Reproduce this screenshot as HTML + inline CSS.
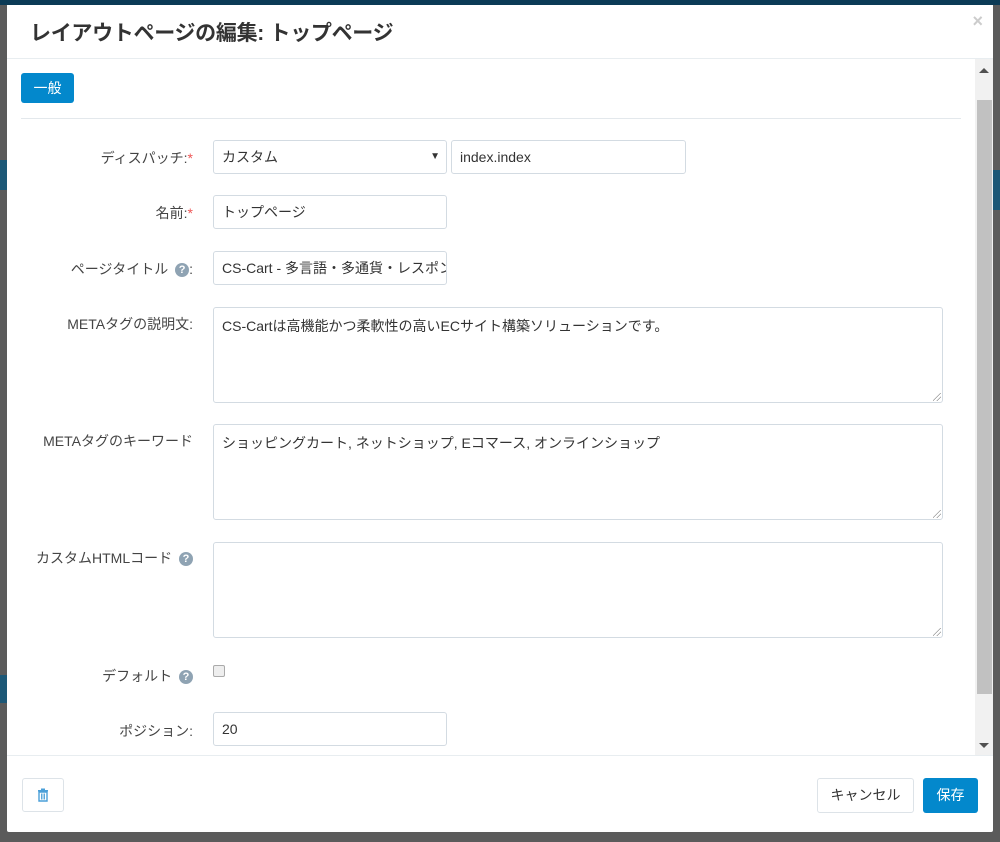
<!DOCTYPE html>
<html><head><meta charset="utf-8"><style>
*{box-sizing:border-box;margin:0;padding:0}
body{width:1000px;height:842px;overflow:hidden;background:#5b5b5b;font-family:"Liberation Sans","Noto Sans CJK JP",sans-serif;color:#333;position:relative;font-size:14px}
.topband{position:absolute;left:0;top:0;width:1000px;height:5px;background:#0b3b56}
.bg{position:absolute;background:#4e4e4e}
.modal{position:absolute;left:7px;top:5px;width:986px;height:827px;background:#fff;border-radius:2px}
.hdr{position:absolute;left:0;top:0;width:986px;height:54px;border-bottom:1px solid #e8edf0;z-index:2;background:#fff}
.hdr h3{position:absolute;left:23px;top:12px;font-size:21px;font-weight:bold;color:#333;letter-spacing:-0.3px}
.close{position:absolute;right:10px;top:6px;color:#ccc;font-size:18px;font-weight:bold}
.body{position:absolute;left:0;top:49px;width:968px;height:701px;overflow:hidden}
.sb{position:absolute;left:968px;top:54px;width:18px;height:696px;background:#f1f1f1}
.thumb{position:absolute;left:2px;top:41px;width:15px;height:594px;background:#c1c1c1}
.tab{position:absolute;left:14px;top:19px;width:53px;height:30px;background:#0388cc;color:#fff;border-radius:3px;text-align:center;line-height:30px;font-size:14px}
.hr{position:absolute;left:14px;top:64px;width:940px;height:1px;background:#e3e8ec}
.lbl{position:absolute;right:782px;font-size:14px;color:#444;white-space:nowrap}
.req{color:#e55;}
.q{display:inline-block;width:14px;height:14px;border-radius:50%;background:#8fa3b3;color:#fff;font-size:11px;font-weight:bold;text-align:center;line-height:14px;vertical-align:1px;margin-left:3px}
.in{position:absolute;border:1px solid #d3dbe2;border-radius:3px;background:#fff;padding:0 8px;font-size:14px;color:#333;white-space:nowrap;overflow:hidden}
.ta{position:absolute;left:206px;width:730px;height:96px;border:1px solid #d3dbe2;border-radius:3px;padding:8px 8px;font-size:14px;color:#333}
.grip{position:absolute;right:1px;bottom:1px;width:8px;height:8px;background:linear-gradient(135deg,transparent 45%,#999 45%,#999 52%,transparent 52%,transparent 70%,#999 70%,#999 77%,transparent 77%)}
.ftr{position:absolute;left:0;top:750px;width:986px;height:77px;border-top:1px solid #e8edf0}
.btn{position:absolute;border-radius:3px;font-size:14px;text-align:center}
</style></head><body>
<div class="topband"></div>
<div class="bg" style="left:0;top:160px;width:7px;height:30px;background:#1d5877"></div>
<div class="bg" style="left:993px;top:170px;width:7px;height:40px;background:#1d5877"></div>
<div class="bg" style="left:0;top:675px;width:7px;height:28px;background:#1d5877"></div>
<div class="modal">
 <div class="hdr"><h3>レイアウトページの編集: トップページ</h3><div class="close">×</div></div>
 <div class="body">
  <div class="tab">一般</div>
  <div class="hr"></div>
  <div class="lbl" style="top:94px">ディスパッチ:<span class="req">*</span></div>
  <div class="in" style="left:206px;top:86px;width:234px;height:34px;line-height:32px">カスタム<span style="position:absolute;right:6px;font-size:10px;color:#333">▼</span></div>
  <div class="in" style="left:444px;top:86px;width:235px;height:34px;line-height:32px">index.index</div>
  <div class="lbl" style="top:149px">名前:<span class="req">*</span></div>
  <div class="in" style="left:206px;top:141px;width:234px;height:34px;line-height:32px">トップページ</div>
  <div class="lbl" style="top:205px">ページタイトル <span class="q">?</span>:</div>
  <div class="in" style="left:206px;top:197px;width:234px;height:34px;line-height:32px">CS-Cart - 多言語・多通貨・レスポンシブ</div>
  <div class="lbl" style="top:260px">METAタグの説明文:</div>
  <div class="ta" style="top:253px">CS-Cartは高機能かつ柔軟性の高いECサイト構築ソリューションです。<div class="grip"></div></div>
  <div class="lbl" style="top:377px">METAタグのキーワード</div>
  <div class="ta" style="top:370px">ショッピングカート, ネットショップ, Eコマース, オンラインショップ<div class="grip"></div></div>
  <div class="lbl" style="top:494px">カスタムHTMLコード <span class="q">?</span></div>
  <div class="ta" style="top:488px"><div class="grip"></div></div>
  <div class="lbl" style="top:612px">デフォルト <span class="q">?</span></div>
  <div style="position:absolute;left:206px;top:611px;width:12px;height:12px;border:1px solid #aaa;border-radius:2px;background:#eee"></div>
  <div class="lbl" style="top:667px">ポジション:</div>
  <div class="in" style="left:206px;top:658px;width:234px;height:34px;line-height:32px">20</div>
 </div>
 <div class="sb"><div style="position:absolute;left:4px;top:9px;border-left:5px solid transparent;border-right:5px solid transparent;border-bottom:5px solid #505050"></div><div class="thumb"></div><div style="position:absolute;left:4px;top:684px;border-left:5px solid transparent;border-right:5px solid transparent;border-top:5px solid #505050"></div></div>
 <div class="ftr">
  <div class="btn" style="left:15px;top:22px;width:42px;height:34px;border:1px solid #dde3e8">
   <svg width="12" height="14" viewBox="0 0 12 14" style="margin-top:9px"><rect x="1" y="2" width="10" height="1.5" fill="#4a9fd8"/><rect x="4" y="0.5" width="4" height="2" fill="#4a9fd8"/><path d="M2 4h8v9H2z" fill="none" stroke="#4a9fd8" stroke-width="1.4"/><path d="M4.5 5.5v6M6 5.5v6M7.5 5.5v6" stroke="#4a9fd8" stroke-width="0.9"/></svg>
  </div>
  <div class="btn" style="left:810px;top:22px;width:97px;height:35px;border:1px solid #dde3e8;line-height:33px;color:#333">キャンセル</div>
  <div class="btn" style="left:916px;top:22px;width:55px;height:35px;background:#0388cc;color:#fff;line-height:35px">保存</div>
 </div>
</div>
</body></html>
